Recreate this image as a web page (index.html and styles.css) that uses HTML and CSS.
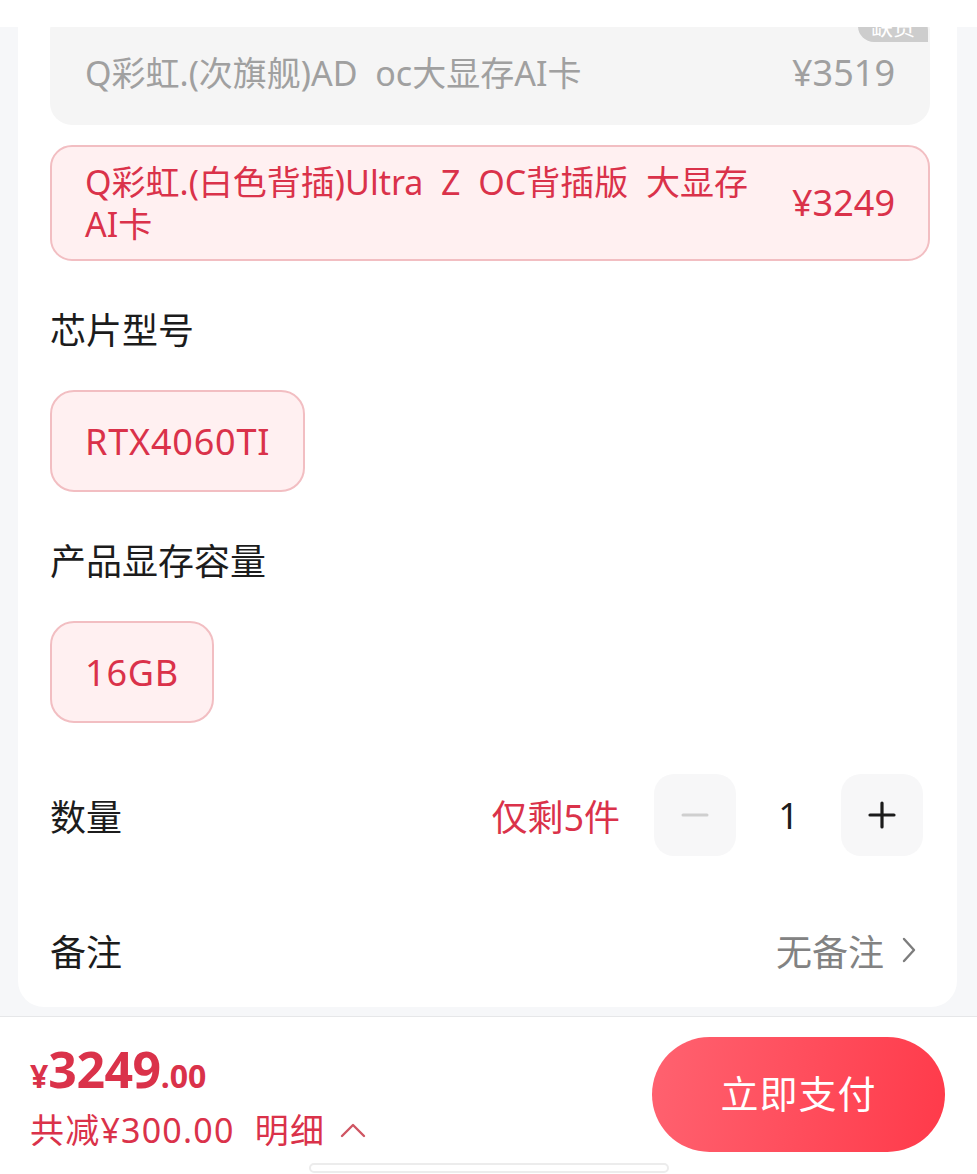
FILE: index.html
```html
<!DOCTYPE HTML>
<html lang="zh-CN">
<head>
    <meta http-equiv="content-type" content="text/html; charset=utf-8">
    <title>确认订单</title>
    <link rel="stylesheet" href="styles.css">
</head>
<body>
    <div class="topbar"></div>
    <div class="scroller">
        <div class="sheet">
            <div class="option option--disabled">
                <span class="option__name">Q彩虹.(次旗舰)AD&nbsp; oc大显存AI卡</span>
                <span class="option__price">¥3519</span>
                <span class="option__badge">缺货</span>
            </div>
            <div class="option option--active">
                <span class="option__name">Q彩虹.(白色背插)Ultra&nbsp; Z&nbsp; OC背插版&nbsp; 大显存AI卡</span>
                <span class="option__price">¥3249</span>
            </div>

            <h3 class="section__title">芯片型号</h3>
            <div class="chips">
                <span class="chip chip--active">RTX4060TI</span>
            </div>

            <h3 class="section__title">产品显存容量</h3>
            <div class="chips">
                <span class="chip chip--active">16GB</span>
            </div>

            <div class="row row--qty">
                <span class="row__label">数量</span>
                <span class="qty__stock">仅剩5件</span>
                <div class="stepper">
                    <button class="stepper__btn stepper__btn--off">
                        <svg width="28" height="28" viewBox="0 0 28 28"><path d="M2 14h24" stroke="#cfcfcf" stroke-width="3" stroke-linecap="round"/></svg>
                    </button>
                    <span class="stepper__count">1</span>
                    <button class="stepper__btn">
                        <svg width="28" height="28" viewBox="0 0 28 28"><path d="M2 14h24M14 2v24" stroke="#1b1b1b" stroke-width="3.2" stroke-linecap="round"/></svg>
                    </button>
                </div>
            </div>

            <div class="row row--remark">
                <span class="row__label">备注</span>
                <span class="remark__value">无备注
                    <svg width="18" height="28" viewBox="0 0 18 28"><path d="M4 3l10 11L4 25" fill="none" stroke="#7d7d7d" stroke-width="2.4" stroke-linecap="round" stroke-linejoin="round"/></svg>
                </span>
            </div>
        </div>
    </div>

    <div class="paybar">
        <div class="paybar__main">
            <div class="total">
                <div class="total__price"><span class="total__yen">¥</span><span class="total__int">3249</span><span class="total__dec">.00</span></div>
                <div class="total__off">共减¥300.00&nbsp; 明细
                    <svg width="28" height="20" viewBox="0 0 28 20"><path d="M3 16L14 5l11 11" fill="none" stroke="#cf5663" stroke-width="2.4" stroke-linecap="round" stroke-linejoin="round"/></svg>
                </div>
            </div>
            <button class="pay__btn">立即支付</button>
        </div>
        <div class="home-indicator"></div>
    </div>
</body>
</html>
```

FILE: styles.css
```css
/* Colours */
:root {
    --page-bg: rgb(246, 247, 249);
    --white: rgb(255, 255, 255);
    --text: rgb(28, 28, 28);
    --muted: rgb(130, 130, 130);
    --disabled-text: rgb(160, 160, 160);
    --disabled-bg: rgb(245, 245, 245);
    --red: rgb(218, 50, 74);
    --red-bg: rgb(255, 240, 241);
    --red-border: rgb(242, 190, 194);
    --stepper-bg: rgb(247, 247, 248);
    --line: rgb(230, 231, 233);
}

html, body {
    margin: 0;
    padding: 0;
    background-color: var(--white);
    font-family: "Noto Sans", "Noto Sans CJK SC", sans-serif;
    color: var(--text);
}

.topbar {
    height: 27px;
    background-color: var(--white);
}

.scroller {
    height: 989px;
    overflow: hidden;
    background-color: var(--page-bg);
    border-bottom: 1px solid var(--line);
}

.sheet {
    margin: -18px 20px 0 18px;
    padding: 0 27px 16px 32px;
    background-color: var(--white);
    border-radius: 0 0 26px 26px;
}

/* Spec options */
.option {
    position: relative;
    display: flex;
    align-items: center;
    justify-content: space-between;
    gap: 28px;
    min-height: 116px;
    box-sizing: border-box;
    padding: 0 33px;
    border: 2px solid transparent;
    border-radius: 22px;
    font-size: 34px;
    line-height: 42px;
    margin-bottom: 20px;
    overflow: hidden;
}

.option--disabled {
    padding-top: 12px;
    background-color: var(--disabled-bg);
    color: var(--disabled-text);
}

.option--active {
    background-color: var(--red-bg);
    border-color: var(--red-border);
    color: var(--red);
}

.option__name {
    flex: 1;
}

.option__price {
    white-space: nowrap;
    font-size: 36px;
}

.option__badge {
    position: absolute;
    top: 0;
    right: 0;
    padding: 0 13px;
    height: 31px;
    line-height: 31px;
    font-size: 22px;
    color: var(--white);
    background-color: rgb(205, 205, 205);
    border-radius: 0 0 0 16px;
}

/* Sections */
.section__title {
    margin: 44px 0 0;
    font-size: 36px;
    line-height: 52px;
    font-weight: normal;
}

.chips {
    display: flex;
    gap: 20px;
    margin-top: 33px;
}

.chip {
    display: inline-flex;
    align-items: center;
    height: 102px;
    box-sizing: border-box;
    padding: 0 33px;
    border: 2px solid var(--red-border);
    border-radius: 24px;
    font-size: 36px;
    letter-spacing: 0.8px;
}

.chip--active {
    background-color: var(--red-bg);
    color: var(--red);
}

/* Rows */
.row {
    display: flex;
    align-items: center;
    height: 82px;
}

.row--qty {
    margin-top: 51px;
    padding-right: 7px;
}

.row--remark {
    margin-top: 53px;
    padding-right: 12px;
}

.row__label {
    flex: 1;
    font-size: 36px;
}

.qty__stock {
    font-size: 36px;
    color: var(--red);
    margin-right: 34px;
}

.stepper {
    display: flex;
    align-items: center;
}

.stepper__btn {
    width: 82px;
    height: 82px;
    border: none;
    padding: 0;
    border-radius: 20px;
    background-color: var(--stepper-bg);
    display: flex;
    align-items: center;
    justify-content: center;
}

.stepper__count {
    width: 105px;
    text-align: center;
    font-size: 36px;
}

.remark__value {
    display: flex;
    align-items: center;
    gap: 16px;
    font-size: 36px;
    color: var(--muted);
}

/* Pay bar */
.paybar {
    background-color: var(--white);
}

.paybar__main {
    display: flex;
    align-items: center;
    justify-content: space-between;
    padding: 20px 32px 0 30px;
}

.total {
    padding-top: 2px;
}

.total__price {
    color: var(--red);
    font-weight: bold;
    line-height: 56px;
    white-space: nowrap;
}

.total__yen {
    font-size: 32px;
}

.total__int {
    font-size: 50px;
    letter-spacing: -0.5px;
}

.total__dec {
    font-size: 32px;
}

.total__off {
    display: flex;
    align-items: center;
    gap: 14px;
    font-size: 34px;
    line-height: 40px;
    letter-spacing: 1.2px;
    color: var(--red);
}

.pay__btn {
    width: 293px;
    height: 115px;
    border: none;
    border-radius: 58px;
    background: linear-gradient(100deg, rgb(255, 98, 112), rgb(255, 58, 74));
    color: var(--white);
    font-family: "Noto Sans CJK SC", sans-serif;
    font-size: 38px;
    letter-spacing: 1px;
    padding: 0 0 6px;
}

.home-indicator {
    width: 356px;
    height: 6px;
    margin: 11px auto 0;
    border: 2px solid rgb(236, 236, 236);
    border-radius: 5px;
}
```
